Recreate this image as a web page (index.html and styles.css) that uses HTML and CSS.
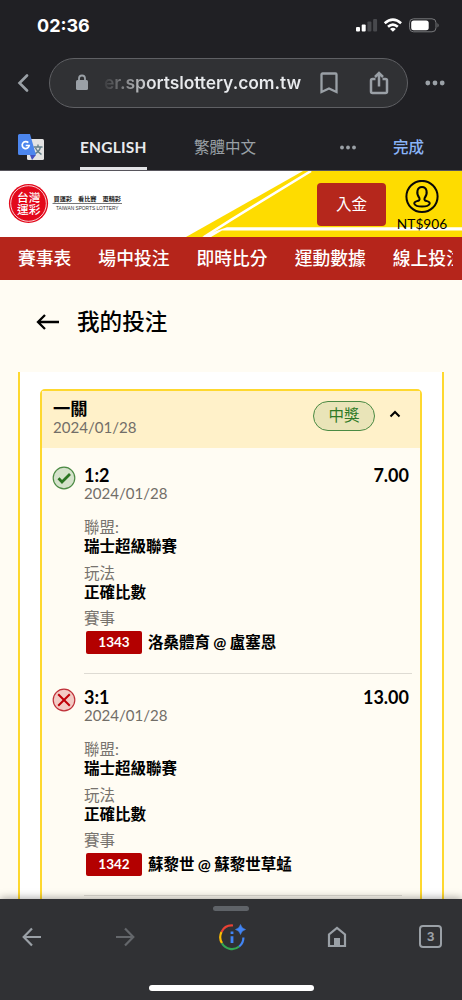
FILE: index.html
```html
<!DOCTYPE html>
<html lang="zh-Hant">
<head>
<meta charset="utf-8">
<title>我的投注</title>
<link rel="stylesheet" href="styles.css">
</head>
<body>
<div class="phone">
  <div class="chrome">
    <div class="status">
      <span class="clock">02:36</span>
      <svg class="status-icons" width="84" height="16" viewBox="0 0 84 16">
        <g fill="#fff"><rect x="0" y="9" width="4" height="4.500" rx="1"/><rect x="5.700" y="6.500" width="4" height="7" rx="1"/></g>
        <g fill="#48494d"><rect x="11.400" y="3.500" width="4" height="10" rx="1"/><rect x="17.100" y="1" width="4" height="12.500" rx="1"/></g>
        <g fill="none" stroke="#fff" stroke-width="2.600"><path d="M28.700 5.300Q36.900-1.900 45.100 5.300"/><path d="M32 8.700Q36.900 4.400 41.800 8.700"/></g>
        <path d="M34 10.900Q36.900 8.700 39.800 10.900L36.900 13.800Z" fill="#fff"/>
        <rect x="53.500" y=".8" width="26.500" height="13" rx="4" fill="none" stroke="#77787b"/>
        <rect x="55.200" y="2.400" width="17.500" height="9.800" rx="2.500" fill="#fff"/>
        <path d="M81.500 5v4.500q2.300-2.200 0-4.500" fill="#77787b"/>
      </svg>
    </div>
    <div class="address">
      <svg class="back" width="12" height="18" viewBox="0 0 12 18"><path d="M10 1.500 2.500 9l7.500 7.500" fill="none" stroke="#9aa0a6" stroke-width="2.600" stroke-linecap="round"/></svg>
      <div class="omnibox">
        <svg class="lock" width="14" height="18" viewBox="0 0 14 18"><rect x="1" y="6" width="12" height="10" rx="1.500" fill="#9aa0a6"/><path d="M4 7V4.500a3 3 0 0 1 6 0V7" fill="none" stroke="#9aa0a6" stroke-width="1.800"/></svg>
        <span class="url">er.sportslottery.com.tw</span>
        <svg class="mark" width="18" height="22" viewBox="0 0 18 22"><path d="M1.500 20V2.500a1 1 0 0 1 1-1h13a1 1 0 0 1 1 1V20L9 16.500Z" fill="none" stroke="#9aa0a6" stroke-width="2.300"/></svg>
        <svg class="share" width="20" height="24" viewBox="0 0 20 24"><path d="M6.500 8H3.500a1.500 1.500 0 0 0-1.500 1.500v11A1.500 1.500 0 0 0 3.500 22h13a1.500 1.500 0 0 0 1.500-1.500v-11A1.500 1.500 0 0 0 16.500 8h-3M10 15.500V3M6 6l4-4 4 4" fill="none" stroke="#9aa0a6" stroke-width="2.500"/></svg>
      </div>
      <svg class="more" width="20" height="6" viewBox="0 0 20 6" fill="#9aa0a6"><circle cx="2.800" cy="3" r="2.400"/><circle cx="10" cy="3" r="2.400"/><circle cx="17.200" cy="3" r="2.400"/></svg>
    </div>
    <div class="translate">
      <svg class="gt" width="27" height="27" viewBox="0 0 27 27">
        <rect x="9" y="5" width="17" height="21" rx="1.500" fill="#e3e3e3"/>
        <path d="M15.500 13h9M20 10.500V13M22.500 13q-1 4.500-6 7M17.500 14q2 4.500 6 6.500" fill="none" stroke="#64808a" stroke-width="1.400"/>
        <path d="M12 21h6l-4 5Z" fill="#4250c0"/>
        <path d="M1.500 0H12l6 21H1.500A1.500 1.500 0 0 1 0 19.500v-18A1.500 1.500 0 0 1 1.500 0" fill="#4c86ee"/>
        <path d="M10.300 8.700A3.500 3.500 0 1 0 11.200 11.500H7.700" fill="none" stroke="#fff" stroke-width="1.700"/>
      </svg>
      <span class="lang active">ENGLISH</span>
      <span class="lang zh">繁體中文</span>
      <svg class="more-small" width="16" height="5" viewBox="0 0 16 5" fill="#9aa0a6"><circle cx="2" cy="2.500" r="1.900"/><circle cx="8" cy="2.500" r="1.900"/><circle cx="14" cy="2.500" r="1.900"/></svg>
      <span class="done">完成</span>
    </div>
  </div>

  <header class="brand">
    <svg class="stripes" width="462" height="66" viewBox="0 0 462 66">
      <path d="M186 66 303 0H462V66Z" fill="#fedc00"/>
      <path d="M204 66 231 48.800 311 0" fill="none" stroke="#fff" stroke-width="2.600"/>
      <path d="M216 60 227 56.300H462V59.500H222L211 66H202Z" fill="#fff"/>
    </svg>
    <svg class="logo" width="125" height="42" viewBox="0 0 125 42">
      <circle cx="20.500" cy="20.500" r="19.600" fill="#e3091b"/>
      <circle cx="20.500" cy="20.500" r="17.800" fill="none" stroke="#fff" stroke-width=".8"/>
      <g class="seal" fill="#fff"><text x="9" y="18.800" textLength="23.500" lengthAdjust="spacingAndGlyphs">台灣</text><text x="9" y="31.200" textLength="23.500" lengthAdjust="spacingAndGlyphs">運彩</text></g>
      <g class="slogan" fill="#222"><text x="45.500" y="17.500" textLength="18.500">買運彩</text><text x="70" y="17.500" textLength="18.500">看比賽</text><text x="94.500" y="17.500" textLength="18.500">更精彩</text></g>
      <path d="M44.500 20.500h69.500" stroke="#555" stroke-width=".8"/>
      <g class="latin" fill="#333"><text x="48" y="27" textLength="62.500">TAIWAN SPORTS LOTTERY</text></g>
    </svg>
    <div class="deposit">入金</div>
    <div class="account">
      <svg width="34" height="34" viewBox="0 0 34 34" fill="none" stroke="#080808" stroke-width="2"><circle cx="17" cy="16.500" r="15.600"/><path d="M14.400 18.100C10.800 13.500 12 7 17 7s6.200 6.500 2.600 11.100c-.7 2 .4 2.500 2.500 3 2.500.6 3 2 2.400 3-.7 1.300-4 2.400-7.500 2.400s-6.800-1.100-7.500-2.400c-.6-1-.1-2.400 2.400-3 2.100-.5 3.200-1 2.500-3Z"/></svg>
      <span class="balance">NT$906</span>
    </div>
  </header>

  <nav class="menu"><div class="menu-track">
    <span>賽事表</span><span>場中投注</span><span>即時比分</span><span>運動數據</span><span>線上投注</span>
  </div></nav>

  <div class="title">
    <svg width="24" height="18" viewBox="0 0 24 18"><path d="M23 9H2M9 2 2 9l7 7" fill="none" stroke="#000" stroke-width="2.300"/></svg>
    <h1>我的投注</h1>
  </div>

  <main class="sheet">
    <section class="ticket">
      <div class="ticket-head">
        <div class="ticket-name"><b>一關</b><span class="date">2024/01/28</span></div>
        <span class="win">中獎</span>
        <svg class="caret" width="12" height="8" viewBox="0 0 12 8"><path d="M1.500 6.500 6 2l4.500 4.500" fill="none" stroke="#000" stroke-width="2"/></svg>
      </div>
      <article class="bet">
        <svg class="mark-icon" width="24" height="24" viewBox="0 0 24 24"><circle cx="12" cy="12" r="10.800" fill="#d5e2cb" stroke="#4b8a43" stroke-width="1.200"/><path d="M6.500 12.300 10 16l8-8" fill="none" stroke="#2b7422" stroke-width="2.800"/></svg>
        <div class="bet-body">
          <div class="score"><b>1:2</b><b>7.00</b></div>
          <div class="date">2024/01/28</div>
          <div class="label first">聯盟:</div><div class="value">瑞士超級聯賽</div>
          <div class="label">玩法</div><div class="value">正確比數</div>
          <div class="label last">賽事</div>
          <div class="match"><span class="code">1343</span><span class="teams">洛桑體育 @ 盧塞恩</span></div>
        </div>
      </article>
      <article class="bet second">
        <svg class="mark-icon" width="24" height="24" viewBox="0 0 24 24"><circle cx="12" cy="12" r="10.800" fill="#f3cbc5" stroke="#bf3038" stroke-width="1.200"/><path d="m6.200 6.200 11.600 11.600m0-11.600L6.200 17.800" fill="none" stroke="#c00008" stroke-width="2"/></svg>
        <div class="bet-body">
          <div class="score"><b>3:1</b><b>13.00</b></div>
          <div class="date">2024/01/28</div>
          <div class="label first">聯盟:</div><div class="value">瑞士超級聯賽</div>
          <div class="label">玩法</div><div class="value">正確比數</div>
          <div class="label last">賽事</div>
          <div class="match"><span class="code">1342</span><span class="teams">蘇黎世 @ 蘇黎世草蜢</span></div>
        </div>
      </article>
    </section>
  </main>

  <footer class="toolbar">
    <div class="grip"></div>
    <div class="tools">
      <svg width="20" height="20" viewBox="0 0 20 20"><path d="M20 10H3M11 1.500 2.700 10l8.300 8.500" fill="none" stroke="#9aa0a6" stroke-width="2.200"/></svg>
      <svg width="20" height="20" viewBox="0 0 20 20"><path d="M1 10h17M10 1.500l8.300 8.500-8.300 8.500" fill="none" stroke="#64676b" stroke-width="2.200"/></svg>
      <svg width="28" height="28" viewBox="0 0 28 28" fill="none" stroke-width="2.200">
        <path d="M3.500 9A11.600 11.600 0 0 1 15 2.500" stroke="#e94235"/><path d="M4 20.200A11.500 11.500 0 0 1 3.500 9" stroke="#fbbc04"/><path d="M21.200 23.500A11.500 11.500 0 0 1 4 20.200" stroke="#34a853"/><path d="M25.400 14.500A11.500 11.500 0 0 1 21.200 23.500" stroke="#4285f4"/>
        <path d="M22.500 1.500Q23.500 5.500 27.500 6.500 23.500 7.500 22.500 11.500 21.500 7.500 17.500 6.500 21.500 5.500 22.500 1.500Z" fill="#4285f4" stroke="#4285f4" stroke-width=".6"/>
        <path d="M14 8.500V11M14 13.300V20" stroke="#4285f4" stroke-width="2.800"/>
      </svg>
      <svg width="20" height="22" viewBox="0 0 20 22"><path d="M2 20V8.500L10 2l8 6.500V20Z" fill="none" stroke="#9aa0a6" stroke-width="2.200"/><path d="M7 12h6v9H7Z" fill="#9aa0a6"/></svg>
      <span class="tabs">3</span>
    </div>
    <div class="home-bar"></div>
  </footer>
</div>
</body>
</html>
```

FILE: styles.css
```css
* { box-sizing: border-box; }
body { margin: 0; background: #fffcf3; }
svg { display: block; flex: none; }
.phone { width: 462px; height: 1000px; overflow: hidden; position: relative; display: flex; flex-direction: column; font-family: Lato, "Noto Sans CJK TC", sans-serif; color: #000; }
.phone span, .phone b { white-space: nowrap; }

.chrome { height: 171px; flex: none; background: #202024; border-bottom: 1px solid #57555c; font-family: Inter, "Noto Sans CJK TC", sans-serif; }
.status { height: 50px; padding: 2px 22px 0 37px; display: flex; align-items: center; justify-content: space-between; }
.clock { font-size: 18px; font-weight: 700; color: #fff; line-height: 34px; }
.address { height: 66px; display: flex; align-items: center; padding-left: 17px; }
.omnibox { width: 359px; height: 50px; margin-left: 20px; border: 1px solid #5f6064; border-radius: 25px; background: #303134; display: flex; align-items: center; }
.lock { margin-left: 25px; }
.url { width: 197px; margin-left: 15px; font-size: 17.500px; font-weight: 600; letter-spacing: -.08px; line-height: 24px; background: linear-gradient(90deg, #3a3b3e 0, #e8eaed 50px); -webkit-background-clip: text; background-clip: text; color: transparent; }
.mark { margin-left: 19px; }
.share { margin-left: 31px; }
.more { margin-left: 17px; }
.translate { height: 54px; display: flex; align-items: center; padding: 9px 0 0 18px; line-height: 45px; }
.gt { margin-top: -1px; }
.lang { font-size: 15.500px; color: #9aa0a6; }
.active { width: 67px; height: 45px; margin-left: 35px; border-bottom: 3px solid #e2e3e6; font-family: Lato, sans-serif; font-weight: 700; letter-spacing: .2px; color: #e8eaed; }
.zh { width: 63px; margin-left: 47px; }
.more-small { margin-left: 83px; }
.done { margin-left: 37px; font-size: 15.500px; color: #8ab4f8; font-weight: 500; }

.brand { height: 66px; flex: none; display: flex; background: #fff; position: relative; }
.stripes { position: absolute; inset: 0; }
.logo { position: relative; margin: 12px 0 0 8px; }
.logo text { font-family: "Noto Sans CJK TC", sans-serif; }
.seal text { font-size: 11.500px; font-weight: 500; }
.slogan text { font-size: 6.200px; font-weight: 700; }
.latin text { font-family: "Liberation Sans", sans-serif; font-size: 4.800px; }
.deposit { position: relative; width: 69px; height: 43px; margin: 12px 0 0 184px; border-radius: 4px; background: #b5271c; color: #fff; font-size: 15.500px; text-align: center; line-height: 42px; }
.account { position: relative; width: 60px; margin-left: 6px; padding-top: 9px; display: flex; flex-direction: column; align-items: center; }
.balance { font-size: 13.700px; line-height: 20px; }

.menu { height: 43px; flex: none; padding: 0 9px 0 18px; background: #b5251b; color: #fff; }
.menu-track { overflow: hidden; display: flex; gap: 27px; font-size: 17.800px; font-weight: 500; line-height: 43px; }
.title { height: 92px; flex: none; display: flex; align-items: center; padding: 0 0 9px 36px; }
.title h1 { margin: 0 0 0 17px; font-size: 22.600px; font-weight: 500; line-height: 32px; }

.sheet { width: 426px; height: 540px; margin-left: 18px; flex: none; padding: 17px 20px 0; background: #fff; border: solid #fed82f; border-width: 0 2px; }
.ticket { height: 540px; border: 2px solid #fed82f; border-radius: 5px; background: #fffcf3; }
.ticket-head { height: 57px; display: flex; align-items: center; padding: 0 19px 0 11px; background: #fff1c9; }
.ticket-name { flex: 1; display: flex; flex-direction: column; margin-top: -4px; }
.ticket-name b { font-size: 17.300px; line-height: 19px; }
.date { font-size: 15.050px; line-height: 18px; color: #726e68; }
.win { width: 62px; height: 30px; margin: -8px 14px 0 0; border: 1px solid #4b8a43; border-radius: 15px; background: #e9e4b8; color: #2f7a27; font-size: 15.500px; line-height: 27px; text-align: center; }
.caret { margin-top: -12px; }
.bet { height: 226px; padding: 17px 8px 0 10px; display: flex; gap: 8px; }
.mark-icon { margin-top: 1px; }
.second { height: 222px; padding-top: 13px; }
.bet-body { flex: 1; border-bottom: 1px solid #dedbd3; }
.second .bet-body { margin-right: 10px; }
.score { display: flex; justify-content: space-between; font-size: 18px; line-height: 20px; padding-right: 3px; }
.second .score { margin-right: -10px; }
.bet .date { line-height: 16px; }
.label { font-size: 15.500px; line-height: 20px; color: #77736e; }
.first { margin-top: 16px; }
.value { font-size: 15.500px; font-weight: 700; line-height: 18px; margin-bottom: 8px; }
.last { line-height: 19px; }
.match { display: flex; align-items: center; margin: 3px 0 0 2px; }
.code { width: 56px; height: 23px; border-radius: 2px; background: #b30000; color: #fff; font-size: 13.500px; font-weight: 700; line-height: 23px; text-align: center; }
.teams { margin-left: 6px; font-size: 15.500px; font-weight: 700; word-spacing: -.4px; line-height: 23px; }

.toolbar { position: absolute; left: 0; right: 0; bottom: 0; height: 101px; background: #303134; box-shadow: 0 -1px 8px rgba(0,0,0,.35); display: flex; flex-direction: column; align-items: center; }
.grip { width: 36px; height: 5px; margin-top: 7px; border-radius: 3px; background: #5f6368; flex: none; }
.tools { width: 462px; padding: 0 20px 0 21px; height: 51px; display: grid; grid-template-columns: 94px 103px 109px 92px 23px; align-items: center; }
.tabs { width: 23px; height: 23px; border: 2px solid #9aa0a6; border-radius: 4px; font: 700 12px/19px Inter, sans-serif; color: #9aa0a6; text-align: center; }
.home-bar { width: 165px; height: 6px; margin-top: 23px; border-radius: 3px; background: #fff; }
```
